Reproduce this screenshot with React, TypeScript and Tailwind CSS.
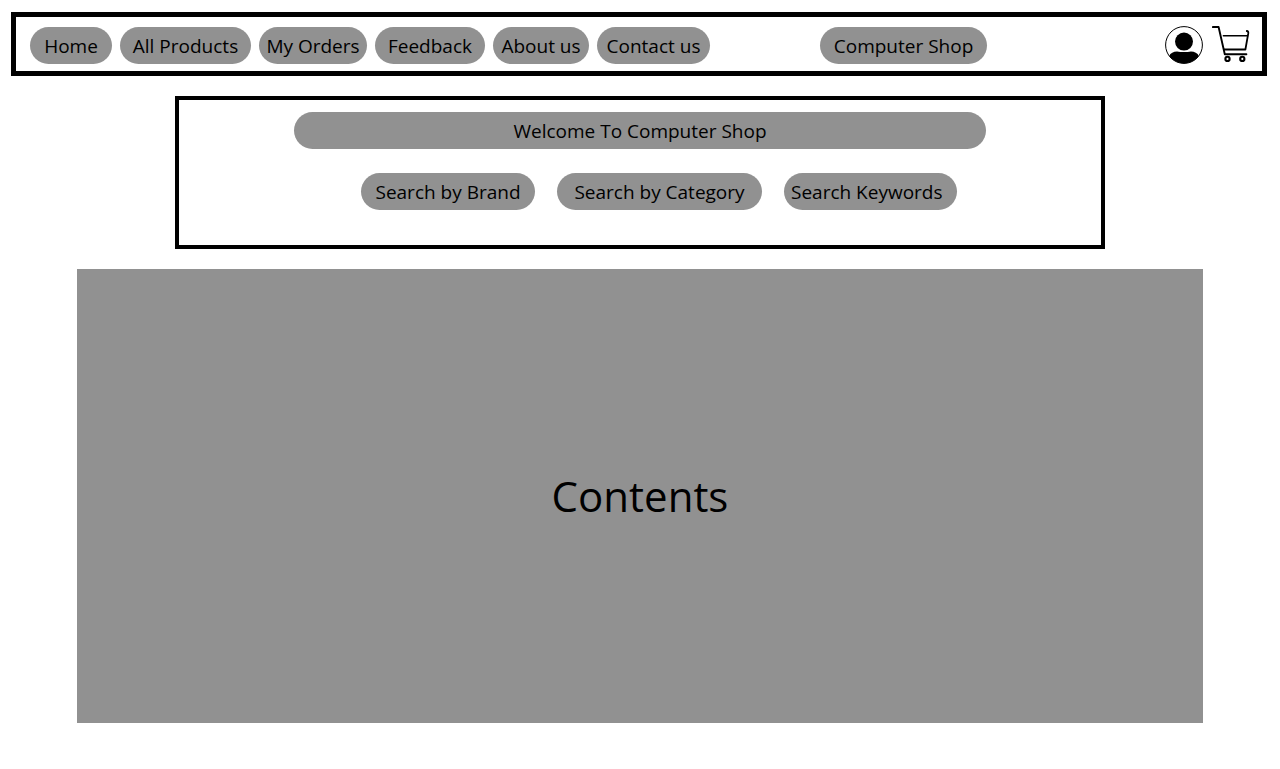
import type { ReactNode } from "react";

const navItems = [
  { label: "Home", width: "w-[82px]" },
  { label: "All Products", width: "w-[131px]" },
  { label: "My Orders", width: "w-[108px]" },
  { label: "Feedback", width: "w-[110px]" },
  { label: "About us", width: "w-[96px]" },
  { label: "Contact us", width: "w-[113px]" },
];

const pill =
  "flex h-[37px] shrink-0 items-center justify-center whitespace-nowrap rounded-full bg-[#919191]";

function NavPill({ width, children }: { width: string; children: ReactNode }) {
  return (
    <a href="#" className={`${pill} pt-0.5 ${width}`}>
      {children}
    </a>
  );
}

function UserIcon() {
  return (
    <svg viewBox="0 0 38 38" className="size-[38px]" aria-hidden="true">
      <clipPath id="avatar">
        <circle cx="19" cy="19" r="18.5" />
      </clipPath>
      <circle cx="19" cy="19" r="18.4" fill="white" stroke="black" strokeWidth="1" />
      <circle cx="19" cy="15.6" r="9" fill="black" />
      <path
        d="M4 30.2 C5.5 27 8.5 25.5 12 25.5 C16 26.3 22 26.3 26 25.5 C29.5 25.5 32.5 27 34 30.2 L34 38 H4 Z"
        fill="black"
        clipPath="url(#avatar)"
      />
    </svg>
  );
}

function CartIcon() {
  return (
    <svg
      viewBox="0 0 38 38"
      className="size-[38px]"
      fill="none"
      stroke="black"
      strokeWidth="1.9"
      strokeLinecap="round"
      strokeLinejoin="round"
      aria-hidden="true"
    >
      <path d="M0.9 1 H6.6 L12.8 28.3 H34.4" />
      <path d="M11.4 9.7 H35.6" strokeWidth="1.6" />
      <path d="M12 23.5 H33.4 L36.3 7.2 Q36.5 5.2 34.8 5" strokeWidth="1.8" />
      <circle cx="15.5" cy="32.9" r="2.1" strokeWidth="2.1" />
      <circle cx="30.3" cy="32.9" r="2.1" strokeWidth="2.1" />
    </svg>
  );
}

export default function App() {
  return (
    <div className="min-h-screen bg-white pt-3 pb-[46px] font-['Open_Sans','Noto_Sans',sans-serif] text-[19px] leading-7 text-black">
      <header className="mr-[13px] ml-[11px] flex h-16 items-center border-5 border-black pt-0.5 pr-3 pl-3.5">
        <nav className="flex gap-2">
          {navItems.map((item) => (
            <NavPill key={item.label} width={item.width}>
              {item.label}
            </NavPill>
          ))}
        </nav>
        <NavPill width="ml-[110px] w-[167px]">Computer Shop</NavPill>
        <div className="ml-auto flex gap-[9px]">
          <button type="button" aria-label="Account">
            <UserIcon />
          </button>
          <button type="button" aria-label="Cart">
            <CartIcon />
          </button>
        </div>
      </header>

      <main>
        <section className="mx-auto mt-5 w-[930px] max-w-full border-4 border-black pt-3 pb-[35px]">
          <h1 className={`${pill} mx-auto w-3/4`}>Welcome To Computer Shop</h1>
          <div className="mt-6 flex justify-center gap-[22px] pl-[38px]">
            <button type="button" className={`${pill} w-[174px]`}>
              Search by Brand
            </button>
            <button type="button" className={`${pill} w-[205px]`}>
              Search by Category
            </button>
            <input
              type="text"
              aria-label="Search Keywords"
              placeholder="Search Keywords"
              className="h-[37px] w-[173px] rounded-full bg-[#919191] pl-[7px] placeholder:text-black placeholder:opacity-100"
            />
          </div>
        </section>

        <section className="mx-[77px] mt-5 flex h-[454px] items-center justify-center bg-[#919191]">
          <h2 className="text-[42px]">Contents</h2>
        </section>
      </main>
    </div>
  );
}
